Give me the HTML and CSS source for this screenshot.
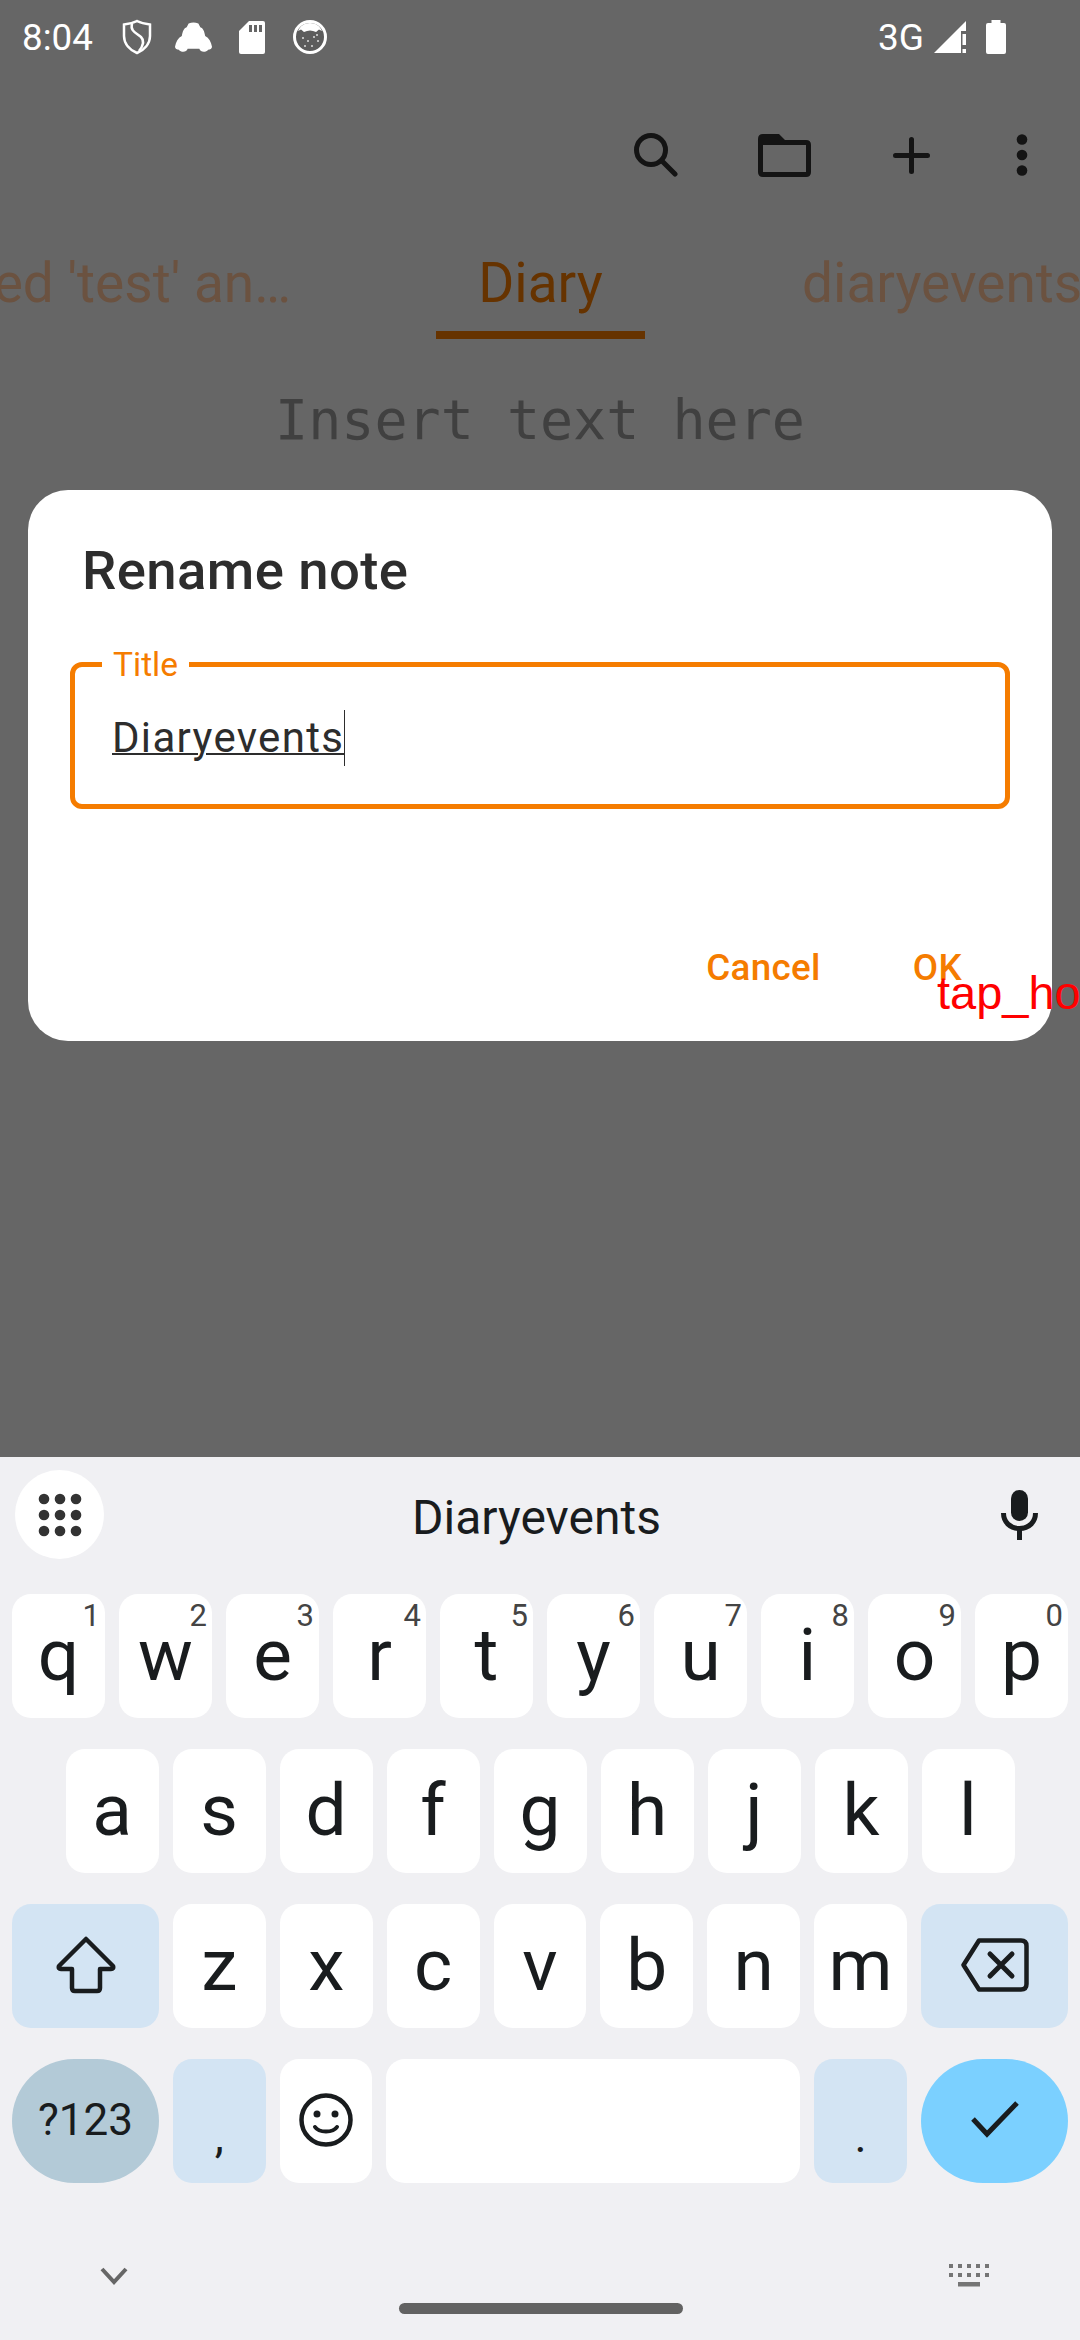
FILE: index.html
```html
<!DOCTYPE html>
<html lang="en">
<head>
  <meta charset="UTF-8">
  <meta name="viewport" content="width=device-width, initial-scale=1">
  <title>Rename note</title>
  <link rel="stylesheet" href="styles.css">
</head>
<body>
  <div class="screen">
    <div class="app">
      <div class="status-bar">
        <span class="clock">8:04</span>
        <svg class="st-shield" width="30" height="36" viewBox="0 0 30 36"><path d="M15 2 C19 4 24 5 28 5.500 V17 C28 25 22 31 15 34 C8 31 2 25 2 17 V5.500 C6 5 11 4 15 2 Z" fill="none" stroke="#fff" stroke-width="2.500"/><path d="M10 4.500 C8 12 14 14 19 18 C23 22 21 27 17 32" fill="none" stroke="#fff" stroke-width="2.500"/></svg>
        <svg class="st-car" width="37" height="31" viewBox="0 0 38 31"><path d="M14 1 Q19 -1 24 1 L26 5 C29 6 30 9 31 14 C35 16 37 20 38 25 C38 27 36 28 34 28 C32 31 26 31 25 27 H13 C12 31 6 31 4 28 C2 28 0 27 0 25 C1 20 3 16 7 14 C8 9 9 6 12 5 Z" fill="#fff"/></svg>
        <svg class="st-sd" width="26" height="33" viewBox="0 0 26 33"><path d="M10 0 H24 Q26 0 26 2 V31 Q26 33 24 33 H2 Q0 33 0 31 V10 Z" fill="#fff"/><path d="M10 4 h3 v7 h-3 z M15 4 h3 v7 h-3 z M20 4 h3 v7 h-3 z" fill="#666"/></svg>
        <svg class="st-cookie" width="34" height="34" viewBox="0 0 34 34"><circle cx="17" cy="17" r="15.500" fill="#5c5c5c" stroke="#fff" stroke-width="3"/><path d="M5 11 C7 6 11 3 17 3 C23 3 27 6 29 11 L26 9.500 L23 12 C19 10 15 10 11 12 L8 9.500 Z" fill="#fff"/><g fill="#ddd"><circle cx="10" cy="18" r="1"/><circle cx="15" cy="21" r="1"/><circle cx="21" cy="17" r="1"/><circle cx="25" cy="21" r="1"/><circle cx="12" cy="26" r="1"/><circle cx="19" cy="26" r="1"/><circle cx="24" cy="15" r="1"/></g></svg>
        <span class="status-spacer"></span>
        <span class="net">3G</span>
        <svg class="st-signal" width="33" height="33" viewBox="0 0 33 33"><path d="M0 32 L27 5 V32 Z" fill="#fff"/><path d="M27 5 L32 0 V10 H27 Z" fill="#fff"/><path d="M28.500 13 h3.500 v11 h-3.500 z M28.500 28 h3.500 v4 h-3.500 z" fill="#fff"/></svg>
        <svg class="st-battery" width="20" height="34" viewBox="0 0 20 34"><path d="M5.500 0 H14.500 V3 H18 Q20 3 20 5 V32 Q20 34 18 34 H2 Q0 34 0 32 V5 Q0 3 2 3 H5.500 Z" fill="#fff"/></svg>
      </div>

      <div class="toolbar">
        <svg class="tool-search" width="44" height="44" viewBox="0 0 44 44"><circle cx="17" cy="17" r="14.500" fill="none" stroke="#141414" stroke-width="5"/><path d="M28 28 L41 41" stroke="#141414" stroke-width="5" stroke-linecap="round"/></svg>
        <svg class="tool-folder" width="53" height="43" viewBox="0 0 53 43"><path d="M5 0 H21 L27 6 H48 Q53 6 53 11 V38 Q53 43 48 43 H5 Q0 43 0 38 V5 Q0 0 5 0 Z M5 11 V38 H48 V11 Z" fill="#141414" fill-rule="evenodd"/></svg>
        <svg class="tool-plus" width="37" height="37" viewBox="0 0 37 37"><path d="M18.500 2.500 V34.500 M2.500 18.500 H34.500" stroke="#141414" stroke-width="5" stroke-linecap="round"/></svg>
        <svg class="tool-more" width="12" height="42" viewBox="0 0 12 42"><circle cx="6" cy="5.500" r="5.300" fill="#141414"/><circle cx="6" cy="21" r="5.300" fill="#141414"/><circle cx="6" cy="36.500" r="5.300" fill="#141414"/></svg>
      </div>

      <div class="tabs">
        <span class="tab tab-left">ed 'test' an…</span>
        <span class="tab tab-active">Diary</span>
        <span class="tab tab-right">diaryevents</span>
      </div>

      <div class="note-hint">Insert text here</div>

      <div class="dialog">
        <h2 class="dialog-title">Rename note</h2>
        <div class="field">
          <span class="field-label">Title</span>
          <span class="field-value">Diaryevents</span>
        </div>
        <div class="dialog-actions">
          <span class="btn btn-cancel">Cancel</span>
          <span class="btn">OK</span>
        </div>
      </div>
    </div>

    <div class="keyboard">
      <div class="suggest-row">
        <span class="grid-btn">
          <svg width="44" height="44" viewBox="0 0 44 44" fill="#333"><circle cx="6" cy="6" r="5.300"/><circle cx="22" cy="6" r="5.300"/><circle cx="38" cy="6" r="5.300"/><circle cx="6" cy="22" r="5.300"/><circle cx="22" cy="22" r="5.300"/><circle cx="38" cy="22" r="5.300"/><circle cx="6" cy="38" r="5.300"/><circle cx="22" cy="38" r="5.300"/><circle cx="38" cy="38" r="5.300"/></svg>
        </span>
        <span class="suggestion">Diaryevents</span>
        <svg class="mic" width="37" height="50" viewBox="0 0 37 50"><rect x="10" y="0" width="17" height="31" rx="8.500" fill="#191c1e"/><path d="M2.500 23 C2.500 32 9 38.500 18.500 38.500 C28 38.500 34.500 32 34.500 23" fill="none" stroke="#191c1e" stroke-width="5"/><path d="M18.500 37 V50" stroke="#191c1e" stroke-width="5"/></svg>
      </div>

      <div class="key-row">
        <span class="key">q<sup>1</sup></span>
        <span class="key">w<sup>2</sup></span>
        <span class="key">e<sup>3</sup></span>
        <span class="key">r<sup>4</sup></span>
        <span class="key">t<sup>5</sup></span>
        <span class="key">y<sup>6</sup></span>
        <span class="key">u<sup>7</sup></span>
        <span class="key">i<sup>8</sup></span>
        <span class="key">o<sup>9</sup></span>
        <span class="key">p<sup>0</sup></span>
      </div>
      <div class="key-row key-row-inset">
        <span class="key">a</span>
        <span class="key">s</span>
        <span class="key">d</span>
        <span class="key">f</span>
        <span class="key">g</span>
        <span class="key">h</span>
        <span class="key">j</span>
        <span class="key">k</span>
        <span class="key">l</span>
      </div>
      <div class="key-row">
        <span class="key key-wide key-mod">
          <svg width="60" height="58" viewBox="0 0 60 58"><path d="M30 3 L57 30 Q58 33 55 33 H44 V52 Q44 55 41 55 H19 Q16 55 16 52 V33 H5 Q2 33 3 30 Z" fill="none" stroke="#191c1e" stroke-width="4.500" stroke-linejoin="round"/></svg>
        </span>
        <span class="key">z</span>
        <span class="key">x</span>
        <span class="key">c</span>
        <span class="key">v</span>
        <span class="key">b</span>
        <span class="key">n</span>
        <span class="key">m</span>
        <span class="key key-wide key-mod">
          <svg width="68" height="54" viewBox="0 0 68 54"><path d="M18 2.500 H60 Q65.500 2.500 65.500 8 V46 Q65.500 51.500 60 51.500 H18 L2.500 27 Z" fill="none" stroke="#191c1e" stroke-width="4.500" stroke-linejoin="round"/><path d="M29 16 L51 38 M51 16 L29 38" stroke="#191c1e" stroke-width="5" stroke-linecap="round"/></svg>
        </span>
      </div>
      <div class="key-row">
        <span class="key key-wide key-symbols">?123</span>
        <span class="key key-mod key-punct">,</span>
        <span class="key">
          <svg width="54" height="54" viewBox="0 0 54 54"><circle cx="27" cy="27" r="24.500" fill="none" stroke="#191c1e" stroke-width="4.500"/><circle cx="18" cy="21" r="3.500" fill="#191c1e"/><circle cx="36" cy="21" r="3.500" fill="#191c1e"/><path d="M16 34 C20 40 34 40 38 34" fill="none" stroke="#191c1e" stroke-width="4" stroke-linecap="round"/></svg>
        </span>
        <span class="key key-space"></span>
        <span class="key key-mod key-punct">.</span>
        <span class="key key-wide key-enter">
          <svg width="48" height="38" viewBox="0 0 48 38"><path d="M2 18 L16 33 L46 2" fill="none" stroke="#191c1e" stroke-width="5"/></svg>
        </span>
      </div>

      <div class="nav-row">
        <svg width="28" height="18" viewBox="0 0 28 18"><path d="M2 2 L14 15 L26 2" fill="none" stroke="#666" stroke-width="4"/></svg>
        <span class="home-bar"></span>
        <svg width="40" height="23" viewBox="0 0 40 23" fill="#757575"><path d="M0 0h4v4h-4z M9 0h4v4h-4z M18 0h4v4h-4z M27 0h4v4h-4z M36 0h4v4h-4z M0 9h4v4h-4z M9 9h4v4h-4z M18 9h4v4h-4z M27 9h4v4h-4z M36 9h4v4h-4z M9 18h22v4.500h-22z"/></svg>
      </div>
    </div>

    <div class="debug-tag">tap_ho</div>
  </div>
</body>
</html>
```

FILE: styles.css
```css
/* Basic reset */
body {
  margin: 0;
  background-color: #666666;
  font-family: Roboto, sans-serif;
}
svg {
  display: block;
  flex: none;
}
.screen {
  position: relative;
  width: 1080px;
  height: 2340px;
  overflow: hidden;
  display: flex;
  flex-direction: column;
}

/* Dimmed app behind the dialog */
.app {
  position: relative;
  height: 1457px;
  background-color: #666666;
}
.status-bar {
  display: flex;
  align-items: center;
  height: 74px;
  padding: 0 74px 0 22px;
  color: white;
}
.clock {
  font-size: 36.75px;
  width: 70px;
}
.st-shield { margin-left: 30px; }
.st-car { margin-left: 23px; }
.st-sd { margin-left: 27px; }
.st-cookie { margin-left: 28px; }
.status-spacer { flex: 1; }
.net {
  font-size: 37px;
  width: 46px;
}
.st-signal { margin-left: 10px; }
.st-battery { margin-left: 19px; }

.toolbar {
  display: flex;
  align-items: center;
  box-sizing: border-box;
  height: 157px;
  padding: 5px 52px 0 634px;
}
.tool-folder { margin-left: 80px; }
.tool-plus { margin-left: 82px; }
.tool-more { margin-left: 86px; }

.tabs {
  position: relative;
  height: 108px;
  font-size: 55px;
  color: #6b5240;
}
.tab {
  position: absolute;
  top: 20px;
  white-space: nowrap;
}
.tab-left { right: 789px; }
.tab-right { left: 802px; }
.tab-active {
  left: 436px;
  width: 209px;
  height: 88px;
  box-sizing: border-box;
  text-align: center;
  color: #663300;
  border-bottom: 8px solid #663300;
}
.note-hint {
  margin-top: 49px;
  text-align: center;
  font-family: "DejaVu Sans Mono", monospace;
  font-size: 55px;
  color: #404040;
}

.dialog {
  position: absolute;
  left: 28px;
  top: 490px;
  width: 1024px;
  height: 551px;
  box-sizing: border-box;
  padding: 49px 42px 0;
  background-color: white;
  border-radius: 40px;
  color: #2d2d2d;
}
.dialog-title {
  margin: 0 0 0 12px;
  font-size: 54.500px;
  font-weight: 500;
  letter-spacing: 0.4px;
  line-height: 62px;
}
.field {
  position: relative;
  margin-top: 61px;
  height: 147px;
  box-sizing: border-box;
  padding: 43px 37px 0;
  border: 5px solid #f57c00;
  border-radius: 12px;
}
.field-label {
  position: absolute;
  left: 27px;
  top: -21px;
  padding: 0 11px;
  background-color: white;
  color: #f57c00;
  font-size: 33.500px;
  line-height: 37px;
}
.field-value {
  display: inline-block;
  font-size: 42px;
  letter-spacing: 1.31px;
  line-height: 56px;
  text-decoration: underline;
  text-decoration-thickness: 2px;
  border-right: 1.500px solid #2d2d2d;
}
.dialog-actions {
  display: flex;
  justify-content: flex-end;
  margin-top: 137px;
  padding-right: 48px;
}
.btn {
  color: #f57c00;
  font-size: 36.750px;
  font-weight: 500;
  letter-spacing: 0.35px;
  line-height: 44px;
}
.btn-cancel { margin-right: 92px; }

/* Keyboard */
.keyboard {
  flex: 1;
  background-color: #f0f0f3;
  padding: 0 12px;
  color: #191c1e;
}
.suggest-row {
  display: flex;
  align-items: center;
  height: 115px;
}
.grid-btn {
  display: flex;
  align-items: center;
  justify-content: center;
  width: 89px;
  height: 89px;
  margin-left: 3px;
  border-radius: 50%;
  background-color: white;
}
.suggestion {
  margin-left: 308px;
  padding-top: 5px;
  width: 250px;
  font-size: 48px;
}
.mic { margin-left: 339px; }

.key-row {
  display: flex;
  gap: 14px;
  height: 124px;
  margin-top: 31px;
}
.key-row-inset {
  padding: 0 53.500px;
}
.suggest-row + .key-row {
  margin-top: 22px;
}
.key {
  position: relative;
  display: flex;
  align-items: center;
  justify-content: center;
  flex: 1 1 0;
  box-sizing: border-box;
  padding-bottom: 3px;
  background-color: white;
  border-radius: 19px;
  font-size: 73px;
  line-height: 118px;
}
.key sup {
  position: absolute;
  top: 4px;
  right: 5px;
  font-size: 31px;
  line-height: 36px;
  color: #444444;
}
.key-wide {
  flex: none;
  width: 147px;
}
.key-space {
  flex: none;
  width: 414px;
}
.key-mod {
  background-color: #d3e4f3;
}
.key-punct {
  font-size: 46px;
  padding-top: 30px;
  padding-bottom: 0;
}
.key-symbols {
  background-color: #b3cad7;
  border-radius: 62px;
  font-size: 44px;
}
.key-enter {
  background-color: #7bd0ff;
  border-radius: 62px;
}
.nav-row {
  display: flex;
  align-items: flex-start;
  margin-top: 84px;
  padding-left: 88px;
}
.home-bar {
  width: 284px;
  height: 11px;
  margin: 36px 0 0 271px;
  border-radius: 6px;
  background-color: #626262;
}
.nav-row svg:last-child {
  margin: -3px 0 0 266px;
}

.debug-tag {
  position: absolute;
  left: 937px;
  top: 966px;
  font-family: "Liberation Sans", Arial, sans-serif;
  font-size: 47px;
  line-height: 54px;
  color: #ff0000;
  white-space: nowrap;
}
```
